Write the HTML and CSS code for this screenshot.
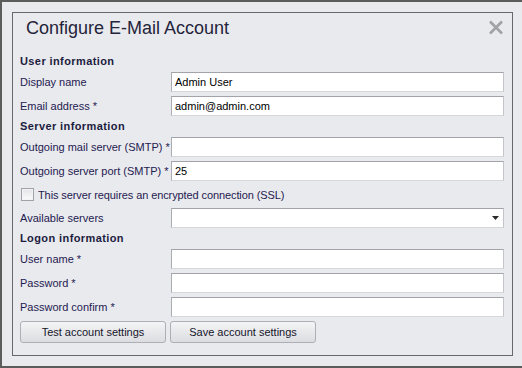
FILE: index.html
```html
<!DOCTYPE html>
<html lang="en">

<head>
    <meta charset="UTF-8">
    <meta name="viewport" content="width=device-width, initial-scale=1.0">
    <title>Configure E-Mail Account</title>
    <link rel="stylesheet" href="styles.css">
</head>

<body>
    <div class="window">
        <div class="frame">
            <div class="title-bar">
                <h1 class="title">Configure E-Mail Account</h1>
                <svg class="close" width="16" height="15" viewBox="0 0 16 15">
                    <path d="M2 1.5 L14 13.5 M14 1.5 L2 13.5" stroke="#a2a2a4" stroke-width="2.6" fill="none" />
                </svg>
            </div>

            <h2 class="section">User information</h2>
            <div class="row">
                <label class="label">Display name</label>
                <input class="field" type="text" value="Admin User">
            </div>
            <div class="row">
                <label class="label">Email address *</label>
                <input class="field" type="text" value="admin@admin.com">
            </div>

            <h2 class="section">Server information</h2>
            <div class="row">
                <label class="label">Outgoing mail server (SMTP) *</label>
                <input class="field" type="text" value="">
            </div>
            <div class="row">
                <label class="label">Outgoing server port (SMTP) *</label>
                <input class="field" type="text" value="25">
            </div>
            <div class="check-row">
                <span class="check"></span>
                <span class="check-text">This server requires an encrypted connection (SSL)</span>
            </div>
            <div class="row">
                <label class="label">Available servers</label>
                <div class="field combo">
                    <svg width="7" height="4" viewBox="0 0 7 4">
                        <path d="M0 0 H7 L3.5 4 Z" fill="#2a2a2a" />
                    </svg>
                </div>
            </div>

            <h2 class="section">Logon information</h2>
            <div class="row">
                <label class="label">User name *</label>
                <input class="field" type="text" value="">
            </div>
            <div class="row">
                <label class="label">Password *</label>
                <input class="field" type="password" value="">
            </div>
            <div class="row">
                <label class="label">Password confirm *</label>
                <input class="field" type="password" value="">
            </div>

            <div class="buttons">
                <button class="btn">Test account settings</button>
                <button class="btn">Save account settings</button>
            </div>
        </div>
    </div>
</body>

</html>
```

FILE: styles.css
```css
* {
    padding: 0;
    margin: 0;
    box-sizing: border-box;
}

body {
    background-color: #5c5c5c;
    font-family: "Liberation Sans", Arial, sans-serif;
    font-size: 11px;
    color: #1f2050;
}

.window {
    margin: 2px 0 0 2px;
    padding: 10px 9px 10px 10px;
    background-color: #e9eaee;
}

.frame {
    border: 1px solid #686868;
    padding: 0 8px 12px 7px;
}

.title-bar {
    display: flex;
    justify-content: space-between;
    align-items: flex-start;
    height: 40px;
}

.title {
    font-size: 18px;
    font-weight: normal;
    line-height: 22px;
    padding: 4px 0 0 6px;
    color: #24243a;
}

.close {
    margin-top: 7px;
}

.section {
    font-size: 11px;
    font-weight: bold;
    letter-spacing: 0.4px;
    line-height: 17px;
    height: 17px;
    color: #1c1c40;
}

.row {
    display: flex;
    align-items: center;
    height: 24px;
}

.label {
    width: 151px;
    flex-shrink: 0;
}

.field {
    flex: 1;
    height: 20px;
    border: 1px solid;
    border-color: #a3a4aa #c4c5ca #d6d7db #acadb2;
    background-color: #fff;
    font-family: "Liberation Sans", Arial, sans-serif;
    font-size: 11px;
    color: #000;
    padding: 0 3px;
    outline: none;
}

.combo {
    display: flex;
    align-items: center;
    justify-content: flex-end;
    padding-right: 4px;
}

.check-row {
    display: flex;
    align-items: center;
    height: 23px;
    padding-left: 1px;
}

.check {
    width: 13px;
    height: 13px;
    border: 1px solid #a2a2a6;
    background: linear-gradient(#e4e4e8, #fbfbfc);
    box-shadow: inset 0 0 0 1px #f4f4f6;
    margin-right: 4px;
}

.check-text {
    letter-spacing: -0.1px;
}

.buttons {
    display: flex;
    gap: 4px;
    padding-top: 2px;
}

.btn {
    width: 146px;
    height: 22px;
    border: 1px solid #aeafb4;
    border-radius: 3px;
    background: linear-gradient(#f4f4f6, #dcdde1);
    font-family: "Liberation Sans", Arial, sans-serif;
    font-size: 11px;
    color: #15152a;
}
```
